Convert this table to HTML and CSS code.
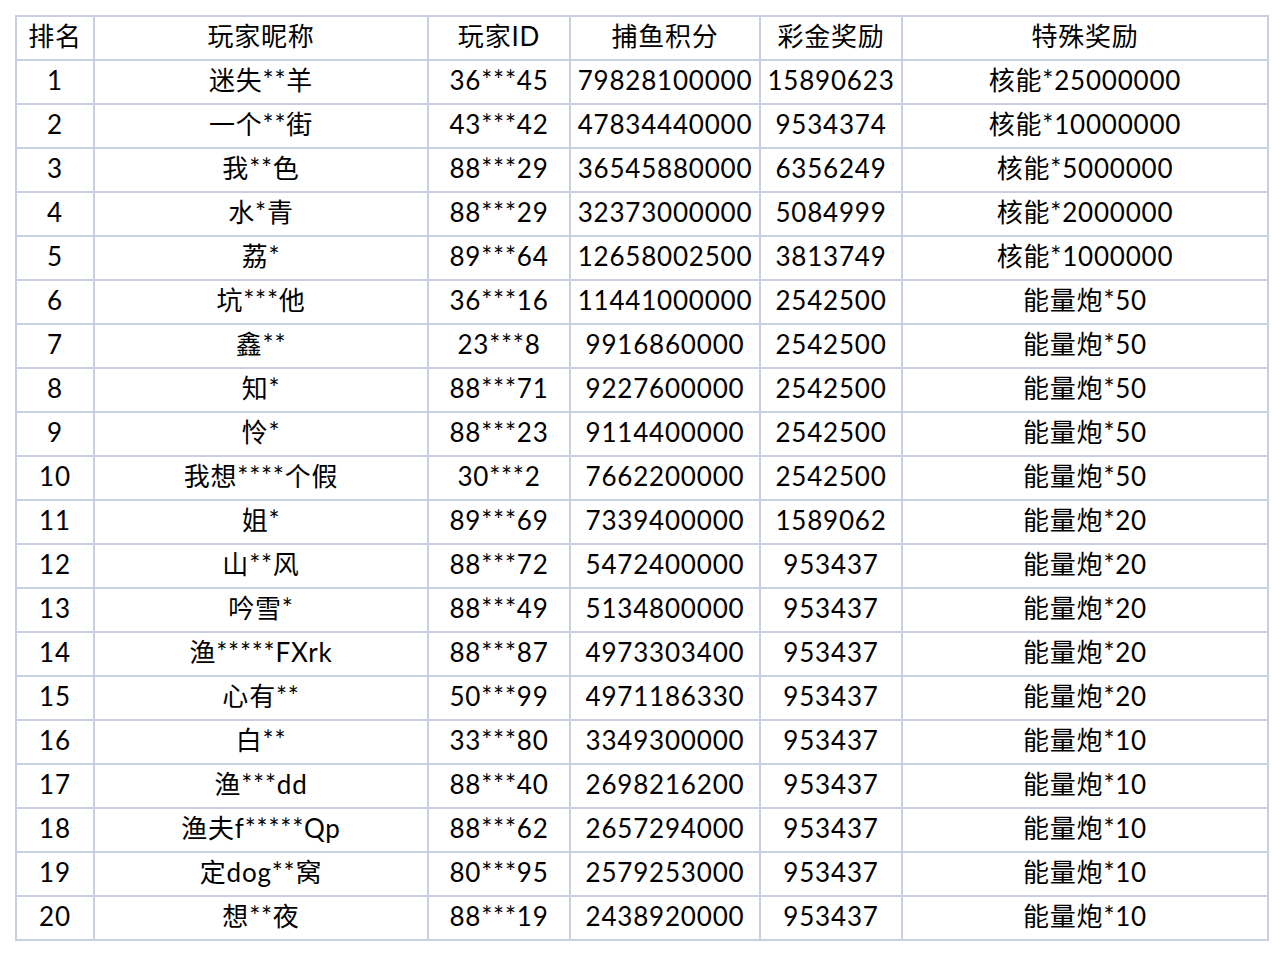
FILE: index.html
```html
<!DOCTYPE html>
<html lang="zh-CN">
<head>
<meta charset="utf-8">
<title>排行榜</title>
<link rel="stylesheet" href="styles.css">
</head>
<body>
<table class="rank">
<colgroup>
<col class="c1"><col class="c2"><col class="c3"><col class="c4"><col class="c5"><col class="c6">
</colgroup>
<thead>
<tr><th>排名</th><th>玩家昵称</th><th>玩家ID</th><th>捕鱼积分</th><th>彩金奖励</th><th>特殊奖励</th></tr>
</thead>
<tbody>
<tr><td>1</td><td>迷失**羊</td><td>36***45</td><td>79828100000</td><td>15890623</td><td>核能*25000000</td></tr>
<tr><td>2</td><td>一个**街</td><td>43***42</td><td>47834440000</td><td>9534374</td><td>核能*10000000</td></tr>
<tr><td>3</td><td>我**色</td><td>88***29</td><td>36545880000</td><td>6356249</td><td>核能*5000000</td></tr>
<tr><td>4</td><td>水*青</td><td>88***29</td><td>32373000000</td><td>5084999</td><td>核能*2000000</td></tr>
<tr><td>5</td><td>荔*</td><td>89***64</td><td>12658002500</td><td>3813749</td><td>核能*1000000</td></tr>
<tr><td>6</td><td>坑***他</td><td>36***16</td><td>11441000000</td><td>2542500</td><td>能量炮*50</td></tr>
<tr><td>7</td><td>鑫**</td><td>23***8</td><td>9916860000</td><td>2542500</td><td>能量炮*50</td></tr>
<tr><td>8</td><td>知*</td><td>88***71</td><td>9227600000</td><td>2542500</td><td>能量炮*50</td></tr>
<tr><td>9</td><td>怜*</td><td>88***23</td><td>9114400000</td><td>2542500</td><td>能量炮*50</td></tr>
<tr><td>10</td><td>我想****个假</td><td>30***2</td><td>7662200000</td><td>2542500</td><td>能量炮*50</td></tr>
<tr><td>11</td><td>姐*</td><td>89***69</td><td>7339400000</td><td>1589062</td><td>能量炮*20</td></tr>
<tr><td>12</td><td>山**风</td><td>88***72</td><td>5472400000</td><td>953437</td><td>能量炮*20</td></tr>
<tr><td>13</td><td>吟雪*</td><td>88***49</td><td>5134800000</td><td>953437</td><td>能量炮*20</td></tr>
<tr><td>14</td><td>渔*****FXrk</td><td>88***87</td><td>4973303400</td><td>953437</td><td>能量炮*20</td></tr>
<tr><td>15</td><td>心有**</td><td>50***99</td><td>4971186330</td><td>953437</td><td>能量炮*20</td></tr>
<tr><td>16</td><td>白**</td><td>33***80</td><td>3349300000</td><td>953437</td><td>能量炮*10</td></tr>
<tr><td>17</td><td>渔***dd</td><td>88***40</td><td>2698216200</td><td>953437</td><td>能量炮*10</td></tr>
<tr><td>18</td><td>渔夫f*****Qp</td><td>88***62</td><td>2657294000</td><td>953437</td><td>能量炮*10</td></tr>
<tr><td>19</td><td>定dog**窝</td><td>80***95</td><td>2579253000</td><td>953437</td><td>能量炮*10</td></tr>
<tr><td>20</td><td>想**夜</td><td>88***19</td><td>2438920000</td><td>953437</td><td>能量炮*10</td></tr>
</tbody>
</table>
</body>
</html>
```
FILE: styles.css
```css
html, body {
  margin: 0;
  padding: 0;
  background: #ffffff;
}
body {
  padding: 15px;
  font-family: Lato, "Noto Sans CJK SC", sans-serif;
  font-size: 26px;
  color: #000000;
}
.rank {
  border-collapse: collapse;
  table-layout: fixed;
  width: 1254px;
}
.c1 { width: 78px; }
.c2 { width: 334px; }
.c3 { width: 142px; }
.c4 { width: 190px; }
.c5 { width: 142px; }
.c6 { width: 366px; }
.rank th,
.rank td {
  border: 2px solid #c8cfe1;
  height: 39px;
  padding: 0 0 3px;
  text-align: center;
  vertical-align: middle;
  font-weight: normal;
  line-height: 39px;
  letter-spacing: 0.8px;
  white-space: nowrap;
}
```
